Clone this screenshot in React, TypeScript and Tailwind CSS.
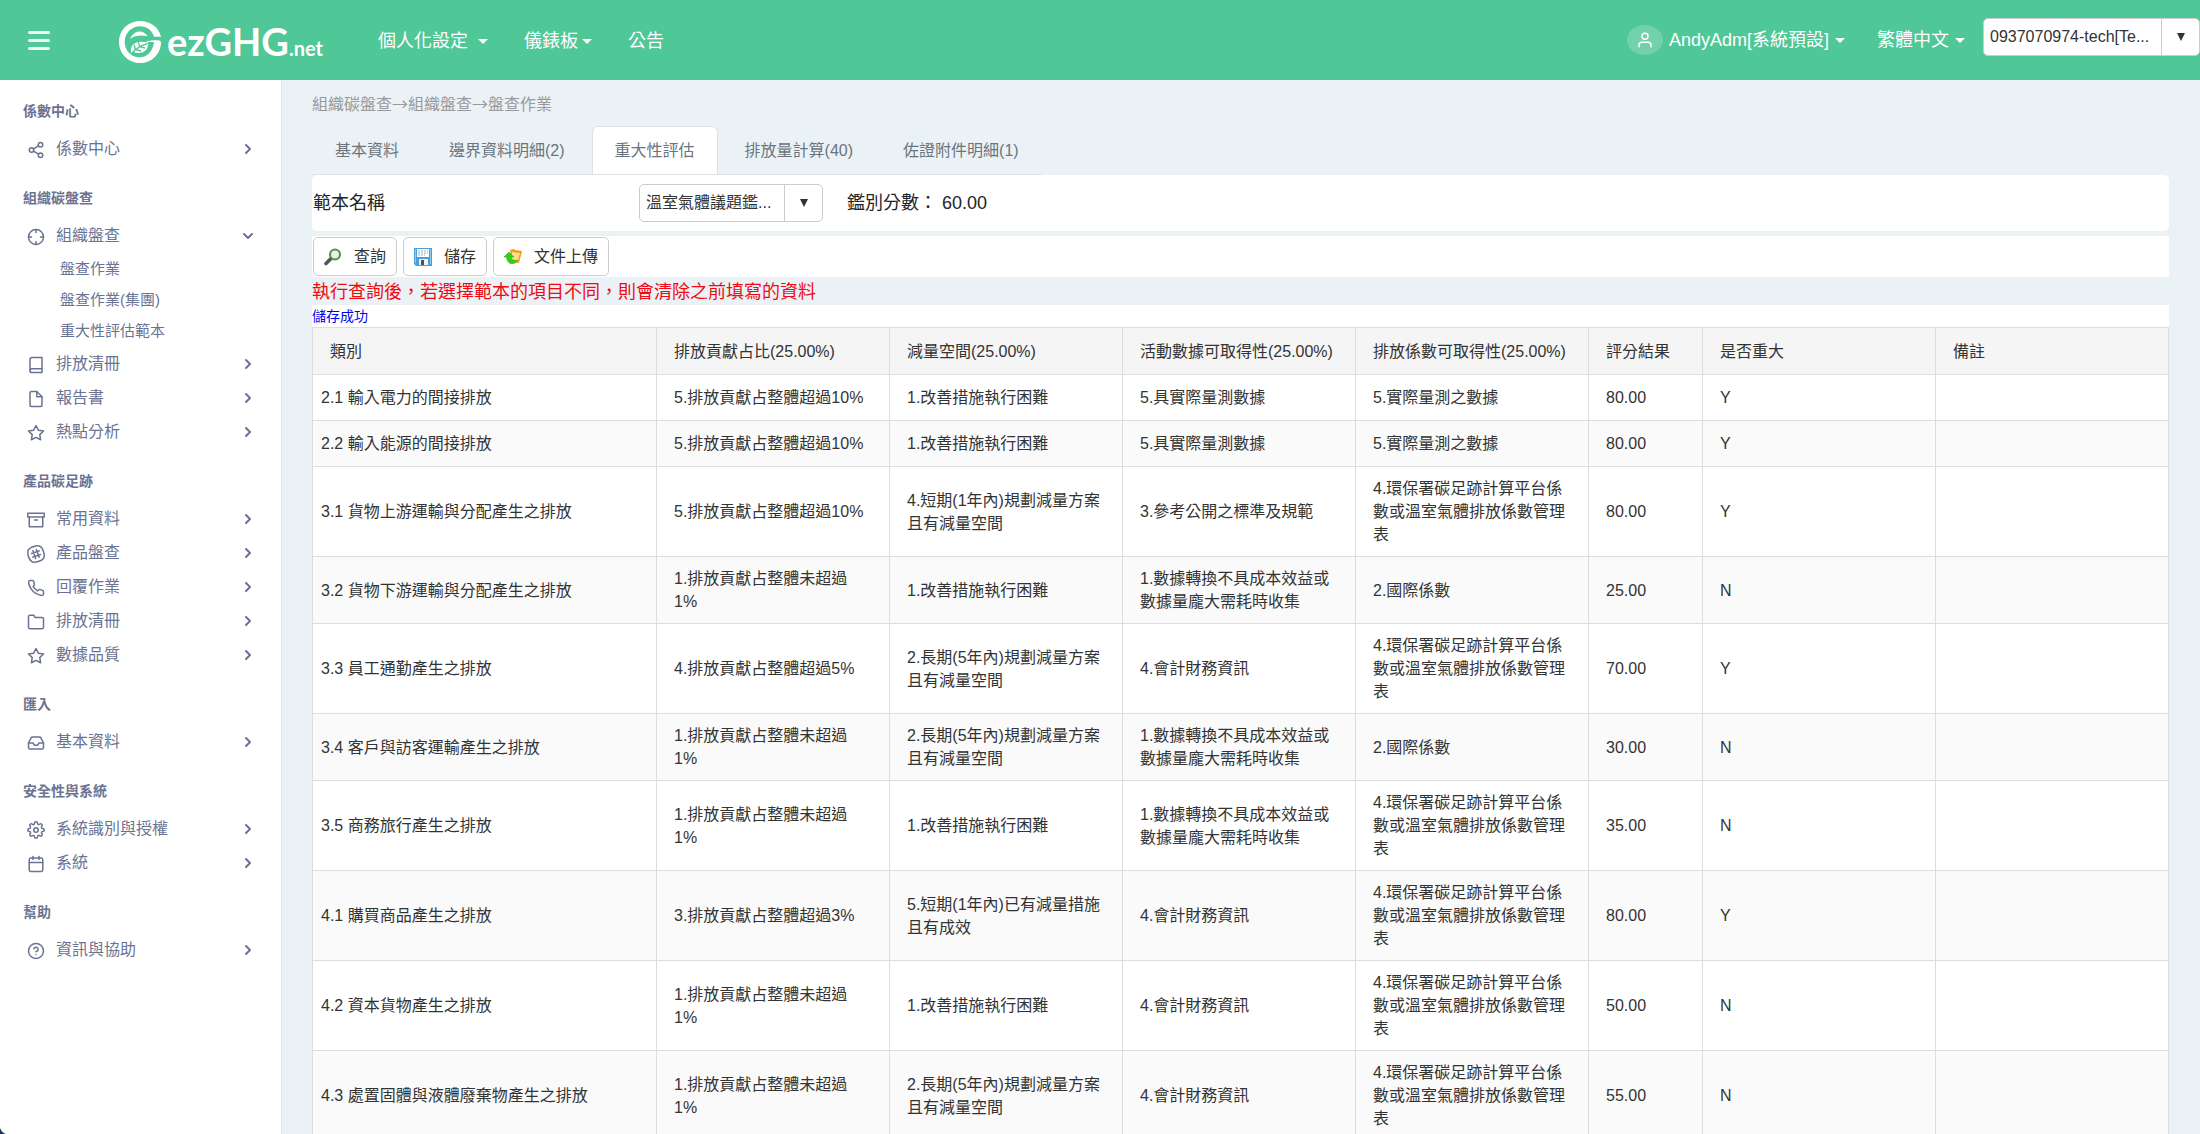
import React from "react";
import {
  FiArchive,
  FiBook,
  FiCalendar,
  FiChevronDown,
  FiChevronRight,
  FiCrosshair,
  FiFile,
  FiFolder,
  FiHelpCircle,
  FiInbox,
  FiPhone,
  FiSettings,
  FiShare2,
  FiStar,
  FiUser,
} from "react-icons/fi";

const HashIcon = () => (
  <svg viewBox="0 0 24 24" className="size-[18px]" fill="none" stroke="currentColor" strokeWidth="2" strokeLinecap="round" strokeLinejoin="round" aria-hidden="true">
    <path d="M22.08 9C19.81 1.41 16.54-.35 9 1.92S-.35 7.46 1.92 15 7.46 24.35 15 22.08 24.35 16.54 22.08 9z" />
    <path d="M12.57 5.99l3.58 10.4M7.85 7.61l3.58 10.4M16.39 7.85L5.99 11.43M18.01 12.57L7.61 16.15" />
  </svg>
);

type Item = { label: string; icon: React.ReactNode; children?: string[] };
type Group = { title: string; items: Item[] };

const ic = "size-[18px]";

const groups: Group[] = [
  { title: "係數中心", items: [{ label: "係數中心", icon: <FiShare2 className={ic} /> }] },
  {
    title: "組織碳盤查",
    items: [
      { label: "組織盤查", icon: <FiCrosshair className={ic} />, children: ["盤查作業", "盤查作業(集團)", "重大性評估範本"] },
      { label: "排放清冊", icon: <FiBook className={ic} /> },
      { label: "報告書", icon: <FiFile className={ic} /> },
      { label: "熱點分析", icon: <FiStar className={ic} /> },
    ],
  },
  {
    title: "產品碳足跡",
    items: [
      { label: "常用資料", icon: <FiArchive className={ic} /> },
      { label: "產品盤查", icon: <HashIcon /> },
      { label: "回覆作業", icon: <FiPhone className={ic} /> },
      { label: "排放清冊", icon: <FiFolder className={ic} /> },
      { label: "數據品質", icon: <FiStar className={ic} /> },
    ],
  },
  { title: "匯入", items: [{ label: "基本資料", icon: <FiInbox className={ic} /> }] },
  {
    title: "安全性與系統",
    items: [
      { label: "系統識別與授權", icon: <FiSettings className={ic} /> },
      { label: "系統", icon: <FiCalendar className={ic} /> },
    ],
  },
  { title: "幫助", items: [{ label: "資訊與協助", icon: <FiHelpCircle className={ic} /> }] },
];

const tabs = ["基本資料", "邊界資料明細(2)", "重大性評估", "排放量計算(40)", "佐證附件明細(1)"];

const columns = [
  "類別",
  "排放貢獻占比(25.00%)",
  "減量空間(25.00%)",
  "活動數據可取得性(25.00%)",
  "排放係數可取得性(25.00%)",
  "評分結果",
  "是否重大",
  "備註",
];

const under1 = "1.排放貢獻占整體未超過1%";
const over10 = "5.排放貢獻占整體超過10%";
const hard = "1.改善措施執行困難";
const longTerm = "2.長期(5年內)規劃減量方案且有減量空間";
const costly = "1.數據轉換不具成本效益或數據量龐大需耗時收集";
const finance = "4.會計財務資訊";
const platform = "4.環保署碳足跡計算平台係數或溫室氣體排放係數管理表";

const rows: string[][] = [
  ["2.1 輸入電力的間接排放", over10, hard, "5.具實際量測數據", "5.實際量測之數據", "80.00", "Y", ""],
  ["2.2 輸入能源的間接排放", over10, hard, "5.具實際量測數據", "5.實際量測之數據", "80.00", "Y", ""],
  ["3.1 貨物上游運輸與分配產生之排放", over10, "4.短期(1年內)規劃減量方案且有減量空間", "3.參考公開之標準及規範", platform, "80.00", "Y", ""],
  ["3.2 貨物下游運輸與分配產生之排放", under1, hard, costly, "2.國際係數", "25.00", "N", ""],
  ["3.3 員工通勤產生之排放", "4.排放貢獻占整體超過5%", longTerm, finance, platform, "70.00", "Y", ""],
  ["3.4 客戶與訪客運輸產生之排放", under1, longTerm, costly, "2.國際係數", "30.00", "N", ""],
  ["3.5 商務旅行產生之排放", under1, hard, costly, platform, "35.00", "N", ""],
  ["4.1 購買商品產生之排放", "3.排放貢獻占整體超過3%", "5.短期(1年內)已有減量措施且有成效", finance, platform, "80.00", "Y", ""],
  ["4.2 資本貨物產生之排放", under1, hard, finance, platform, "50.00", "N", ""],
  ["4.3 處置固體與液體廢棄物產生之排放", under1, longTerm, finance, platform, "55.00", "N", ""],
];

const Logo = () => (
  <a href="#home" aria-label="ezGHG.net" className="flex items-center gap-1.5 text-white">
    <svg viewBox="0 0 126 126" className="size-[42px]" fill="none" aria-hidden="true">
      <path d="M126 47C119 19 94 0 63 0 28 0 0 28 0 63s28 63 63 63c34 0 62-26 63-61l-2-6c-22-3-41 0-52 9 12-5 22-6 33-4-3 26-20 45-43 45-25 0-45-20-45-46s20-47 46-47c20 0 36 12 42 31z" fill="#fff" />
      <path d="M33 54C44 28 72 24 86 46c-20-4-37-3-53 8z" fill="#fff" />
      <path d="M36 92c-4-24 20-36 52-27 0 24-20 38-46 27l-8 9z" fill="#fff" />
      <path d="M36 99C48 84 64 74 86 67M50 86l-5-15M50 86l16 4M62 77l-4-13M62 77l16 4" stroke="#50c796" strokeWidth="4" />
    </svg>
    <span className="flex items-baseline font-[Lato] leading-none">
      <span className="text-[38px] font-bold">ezGHG</span>
      <span className="text-xl font-bold">.net</span>
    </span>
  </a>
);

const Caret = () => <span aria-hidden="true" className="border-x-5 border-t-5 border-x-transparent border-t-white" />;

const SearchIcon = () => (
  <svg viewBox="0 0 18 18" className="size-[18px]" aria-hidden="true">
    <path d="M7 10.500L2 15.500" stroke="#555" strokeWidth="3.600" strokeLinecap="round" />
    <circle cx="11" cy="6.500" r="5" fill="#e4f3dc" stroke="#5c8a4a" strokeWidth="2" />
  </svg>
);

const SaveIcon = () => (
  <svg viewBox="0 0 18 18" className="size-[18px]" aria-hidden="true">
    <path d="M0 0h18v18H2l-2-2z" fill="#4a9fd8" />
    <path d="M1 1h1v14H1zM16 1h1v15h-1z" fill="#8ccbf0" />
    <path d="M3 1h12v8H3z" fill="#fff" />
    <path d="M4 3h10M4 5h10M4 7h7" stroke="#9ab0c0" strokeDasharray="2 1" />
    <path d="M5 11h9v6H5z" fill="#eef2f5" />
    <path d="M7 12h3v5H7z" fill="#46525c" />
  </svg>
);

const UploadIcon = () => (
  <svg viewBox="0 0 18 18" className="size-[18px]" aria-hidden="true">
    <path d="M6 2l4-1 1 1 7 1-3 12-6-1z" fill="#f59a1f" />
    <path d="M8 4l8 1-2 8-6-1z" fill="#ffe08a" />
    <path d="M0 9l5-5 5 5H7.500c0 3 2 4 6 3-2 5-10 6-11-3z" fill="#2fd016" stroke="#23a512" strokeWidth=".5" />
  </svg>
);

function Combo({ id, label, value, box, arrow }: { id: string; label?: string; value: string; box: string; arrow: string }) {
  return (
    <div className={`relative flex shrink-0 rounded-[5px] border border-[#ccc] bg-white text-base text-[#333] ${box}`}>
      <select id={id} aria-label={label} className="h-9 w-full appearance-none bg-transparent pl-1.5">
        <option>{value}</option>
      </select>
      <span aria-hidden="true" className={`pointer-events-none absolute inset-y-0 right-0 flex items-center justify-center border-l border-[#ccc] ${arrow}`}>
        <span className="border-x-4 border-t-8 border-x-transparent border-t-[#333]" />
      </span>
    </div>
  );
}

function Header() {
  return (
    <header className="flex h-20 shrink-0 items-center bg-[#50c796] text-lg text-white">
      <button type="button" aria-label="選單" className="ml-7 flex w-[22px] flex-col gap-[5px]">
        <span className="h-[3px] rounded-full bg-white/90" />
        <span className="h-[3px] rounded-full bg-white/90" />
        <span className="h-[3px] rounded-full bg-white/90" />
      </button>
      <div className="ml-[69px] w-[259px] pt-1"><Logo /></div>
      <nav className="flex items-center gap-9 pt-0.5">
        <button type="button" className="flex items-center gap-[10px]">個人化設定<Caret /></button>
        <button type="button" className="flex items-center gap-1">儀錶板<Caret /></button>
        <a href="#news">公告</a>
      </nav>
      <div className="ml-auto flex items-center">
        <button type="button" className="flex items-center gap-[6px]">
          <span className="flex h-[30px] w-9 items-center justify-center rounded-[50%] bg-white/20">
            <FiUser className="size-[18px]" strokeWidth={2} />
          </span>
          AndyAdm[系統預設]<Caret />
        </button>
        <button type="button" className="ml-8 mr-[18px] flex items-center gap-[6px]">繁體中文<Caret /></button>
        <div className="mb-1.5">
          <Combo id="company" label="公司" value="0937070974-tech[Te..." box="w-[217px]" arrow="w-[38px]" />
        </div>
      </div>
    </header>
  );
}

function Sidebar() {
  return (
    <aside className="w-[282px] shrink-0 overflow-hidden border-r border-[#dde5ea] bg-white pt-2.5 text-[#6b7393]">
      {groups.map((g) => (
        <section key={g.title} className="mb-[11px]">
          <h2 className="flex h-[42px] items-center pl-[23px] text-sm font-bold">{g.title}</h2>
          <ul>
            {g.items.map((it) => (
              <li key={it.label}>
                <a href="#menu" className="flex h-[34px] items-center pl-[27px] pr-[25px] text-base">
                  <span className="mt-0.5">{it.icon}</span>
                  <span className="ml-[11px] flex-1">{it.label}</span>
                  {it.children ? <FiChevronDown className="size-4" strokeWidth={3} /> : <FiChevronRight className="size-4" strokeWidth={3} />}
                </a>
                {it.children && (
                  <ul className="pt-px">
                    {it.children.map((c) => (
                      <li key={c}><a href="#submenu" className="flex h-[31px] items-center pl-[60px] text-[15px]">{c}</a></li>
                    ))}
                  </ul>
                )}
              </li>
            ))}
          </ul>
        </section>
      ))}
    </aside>
  );
}

function ToolButton({ icon, label }: { icon: React.ReactNode; label: string }) {
  return (
    <button type="button" className="flex h-[39px] items-center gap-3 rounded-[5px] border border-[#ccc] bg-white px-2.5 text-base text-[#333]">
      {icon}
      {label}
    </button>
  );
}

export default function App() {
  return (
    <div className="h-screen bg-[#22365c] font-['Liberation_Sans','Noto_Sans_CJK_TC',sans-serif]">
      <div className="flex h-full flex-col overflow-hidden rounded-bl-lg bg-[#eaf2f6]">
        <Header />
        <div className="flex min-h-0 flex-1">
          <Sidebar />
          <main className="min-w-0 flex-1 overflow-y-auto pl-[30px] pr-[31px] [scrollbar-width:none]">
            <nav aria-label="路徑" className="flex h-[46px] items-center font-['Noto_Sans_CJK_TC',sans-serif] text-base text-[#999]">組織碳盤查→組織盤查→盤查作業</nav>
            <div className="flex">
              <div role="tablist" className="flex gap-1 border-b border-[#dee2e6]">
                {tabs.map((t, i) => (
                  <button
                    key={t}
                    type="button"
                    role="tab"
                    aria-selected={i === 2}
                    className={`h-12 rounded-t-md border border-b-0 px-[22px] text-base text-[#6c757d] ${i === 2 ? "border-[#dee2e6] bg-white" : "border-transparent"}`}
                  >
                    {t}
                  </button>
                ))}
              </div>
            </div>
            <div className="flex h-14 items-center rounded-[5px] bg-white pl-px text-lg text-[#212529]">
              <label htmlFor="template" className="w-[326px]">範本名稱</label>
              <Combo id="template" value="溫室氣體議題鑑..." box="w-[184px]" arrow="w-[38px]" />
              <span className="ml-6">鑑別分數： 60.00</span>
            </div>
            <div className="mt-[5px] flex gap-1.5 bg-white px-px py-px">
              <ToolButton icon={<SearchIcon />} label="查詢" />
              <ToolButton icon={<SaveIcon />} label="儲存" />
              <ToolButton icon={<UploadIcon />} label="文件上傳" />
            </div>
            <p className="h-7 text-lg leading-[30px] text-[#f00a14]">執行查詢後，若選擇範本的項目不同，則會清除之前填寫的資料</p>
            <p className="h-[22px] bg-white text-sm leading-[22px] text-[#0000f0]">儲存成功</p>
            <table className="w-full table-fixed border-collapse bg-white text-left text-base leading-[23px] text-[#333]">
              <colgroup>
                <col />
                <col className="w-[233px]" />
                <col className="w-[233px]" />
                <col className="w-[233px]" />
                <col className="w-[233px]" />
                <col className="w-[114px]" />
                <col className="w-[233px]" />
                <col className="w-[233px]" />
              </colgroup>
              <thead>
                <tr className="h-[47px] bg-[#f5f5f5]">
                  {columns.map((c) => (
                    <th key={c} className="whitespace-nowrap border border-[#ddd] px-[17px] font-normal">{c}</th>
                  ))}
                </tr>
              </thead>
              <tbody>
                {rows.map((r) => (
                  <tr key={r[0]} className="h-[46px] even:bg-[#fafafa]">
                    {r.map((c, i) => (
                      <td key={i} className={`border border-[#ddd] py-2.5 ${i === 0 ? "px-2" : "pl-[17px] pr-5"}`}>{c}</td>
                    ))}
                  </tr>
                ))}
              </tbody>
            </table>
          </main>
        </div>
      </div>
    </div>
  );
}
